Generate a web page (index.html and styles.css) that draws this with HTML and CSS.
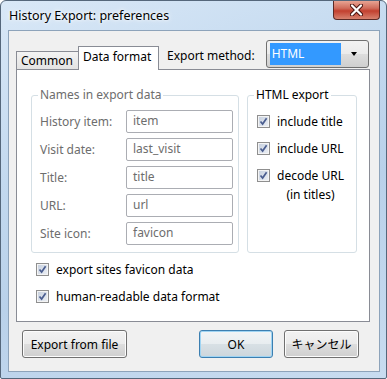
FILE: index.html
```html
<!DOCTYPE html>
<html lang="en">
<head>
  <meta charset="UTF-8" />
  <title>History Export: preferences</title>
  <link rel="stylesheet" href="styles.css">
</head>
<body>

  <div class="window">
    <!-- Title bar -->
    <header class="titlebar">
      <div class="title">History Export: preferences</div>
      <div class="close">
        <svg width="13" height="12" viewBox="0 0 13 12">
          <path d="M2 1.5 L11 10.5 M11 1.5 L2 10.5" stroke="#4a1510" stroke-width="4.2" stroke-linecap="round"/>
          <path d="M2 1.5 L11 10.5 M11 1.5 L2 10.5" stroke="#fff" stroke-width="2.2" stroke-linecap="round"/>
        </svg>
      </div>
    </header>

    <div class="client">
      <div class="tabhead">
        <div class="tabs">
          <div class="tab">Common</div>
          <div class="tab active">Data format</div>
        </div>
        <label class="method-label">Export method:</label>
        <div class="select">
          <span class="select-value">HTML</span>
          <span class="select-arrow"></span>
        </div>
      </div>

      <div class="panel">
        <div class="groups">
          <fieldset class="group names">
            <legend class="muted">Names in export data</legend>
            <div class="name-grid">
              <span class="muted">History item:</span><div class="field">item</div>
              <span class="muted">Visit date:</span><div class="field">last_visit</div>
              <span class="muted">Title:</span><div class="field">title</div>
              <span class="muted">URL:</span><div class="field">url</div>
              <span class="muted">Site icon:</span><div class="field">favicon</div>
            </div>
          </fieldset>

          <fieldset class="group html">
            <legend>HTML export</legend>
            <div class="check-list">
              <div class="check-row"><span class="check"></span><span>include title</span></div>
              <div class="check-row"><span class="check"></span><span>include URL</span></div>
              <div class="check-row"><span class="check"></span><span class="two-line">decode URL<br>(in titles)</span></div>
            </div>
          </fieldset>
        </div>

        <div class="bottom-checks">
          <div class="check-row"><span class="check"></span><span>export sites favicon data</span></div>
          <div class="check-row"><span class="check"></span><span>human-readable data format</span></div>
        </div>
      </div>

      <div class="buttons">
        <button class="btn wide">Export from file</button>
        <button class="btn ok">OK</button>
        <button class="btn cancel">キャンセル</button>
      </div>
    </div>
  </div>

</body>
</html>
```

FILE: styles.css
```css
/* ==== Window frame ==== */
body {
  margin: 0;
  font-family: "Noto Sans", "Noto Sans CJK JP", sans-serif;
  font-size: 12px;
  color: #000;
  background: #fff;
}
.window {
  width: 387px;
  height: 379px;
  box-sizing: border-box;
  border: 1px solid #55677b;
  border-radius: 6px 6px 2px 2px;
  background: linear-gradient(160deg, #d9e8f7 0%, #c3d9ef 35%, #b9d1ea 60%, #c8dcf0 100%);
  display: flex;
  flex-direction: column;
}
.titlebar {
  height: 29px;
  display: flex;
  align-items: flex-start;
  padding-left: 8px;
  padding-right: 6px;
}
.title {
  line-height: 29px;
  font-size: 12.5px;
  text-shadow: 0 0 6px #fff, 0 0 3px #fff;
}
.close {
  margin-left: auto;
  width: 45px;
  height: 18px;
  border: 1px solid #5b2a26;
  border-top: none;
  border-radius: 0 0 4px 4px;
  background: linear-gradient(#e8a493 0%, #d06c5b 40%, #c2402f 55%, #d7826f 100%);
  display: flex;
  align-items: center;
  justify-content: center;
}

/* ==== Client area ==== */
.client {
  margin: 0 6px 6px 7px;
  flex: 1;
  border: 1px solid #8da3ba;
  background: #f0f0f0;
  display: flex;
  flex-direction: column;
}
.tabhead {
  display: flex;
  align-items: center;
  height: 29px;
  margin-top: 9px;
  padding-left: 7px;
}
.tabs {
  display: flex;
  align-items: flex-end;
  align-self: flex-end;
}
.tab {
  height: 17px;
  line-height: 17px;
  padding: 0 4px;
  border: 1px solid #898c95;
  border-bottom: none;
  background: linear-gradient(#f3f3f3, #e3e3e3);
  width: 53px;
}
.tab.active {
  position: relative;
  z-index: 1;
  width: 71px;
  height: 23px;
  line-height: 20px;
  margin-left: -1px;
  margin-bottom: -1px;
  background: #fff;
}
.method-label {
  margin-left: 8px;
  margin-top: 1px;
}
.select {
  margin-left: 11px;
  align-self: flex-start;
  width: 98px;
  height: 26px;
  border: 1px solid #707070;
  border-radius: 3px;
  background: linear-gradient(#f2f2f2 0%, #ebebeb 50%, #dddddd 51%, #cfcfcf 100%);
  display: flex;
  align-items: center;
  padding-left: 3px;
}
.select-value {
  width: 71px;
  height: 22px;
  line-height: 21px;
  padding-left: 2px;
  box-sizing: border-box;
  background: #3399ff;
  color: #fff;
}
.select-arrow {
  margin-left: 10px;
  width: 0;
  height: 0;
  border-left: 3.5px solid transparent;
  border-right: 3.5px solid transparent;
  border-top: 4px solid #000;
}

/* ==== Tab panel ==== */
.panel {
  margin-left: 7px;
  width: 352px;
  height: 251px;
  border: 1px solid #898c95;
  background: #fff;
}
.groups {
  display: flex;
  gap: 8px;
  margin-top: 17px;
  padding-left: 14px;
}
.group {
  margin: 0;
  height: 166px;
  box-sizing: border-box;
  border: 1px solid #d5dfe5;
  border-radius: 3px;
}
.group legend {
  padding: 0 2px;
  line-height: 16px;
}
.muted {
  color: #6d6d6d;
}
.names {
  width: 208px;
  padding: 7px 5px 0 8px;
}
.names legend {
  margin-left: -2px;
}
.name-grid {
  display: grid;
  grid-template-columns: 86px 107px;
  row-gap: 5px;
  align-items: center;
}
.field {
  height: 23px;
  box-sizing: border-box;
  border: 1px solid #abadb3;
  border-radius: 2px;
  padding-left: 6px;
  line-height: 20px;
  color: #6d6d6d;
}
.html {
  width: 110px;
  padding: 9px 4px 0 9px;
}
.html legend {
  margin-left: -3px;
}
.check-list {
  display: flex;
  flex-direction: column;
  gap: 8px;
}
.check-row {
  display: flex;
  align-items: flex-start;
  gap: 7px;
  line-height: 19px;
}
.two-line {
  text-align: center;
}
.check {
  flex: none;
  width: 13px;
  height: 13px;
  margin-top: 3px;
  box-sizing: border-box;
  border: 1px solid #8f8f8f;
  background:
    url("data:image/svg+xml,%3Csvg xmlns='http://www.w3.org/2000/svg' width='11' height='11'%3E%3Cpath d='M2.5 5.5 L4.6 8 L8.6 2.2' fill='none' stroke='%234a5d8f' stroke-width='1.7'/%3E%3C/svg%3E") center no-repeat,
    linear-gradient(135deg, #c4cedd, #eef1f6);
  box-shadow: inset 0 0 0 1px #f4f4f4;
}
.bottom-checks {
  display: flex;
  flex-direction: column;
  gap: 8px;
  margin-top: 7px;
  padding-left: 19px;
}

/* ==== Dialog buttons ==== */
.buttons {
  display: flex;
  margin-top: 8px;
  padding: 0 20px 0 13px;
}
.btn {
  height: 28px;
  font: inherit;
  color: #000;
  border: 1px solid #707070;
  border-radius: 3px;
  background: linear-gradient(#f2f2f2 0%, #ebebeb 50%, #dddddd 51%, #cfcfcf 100%);
  box-shadow: inset 0 0 0 1px #fcfcfc;
  padding: 0;
}
.btn.wide {
  width: 105px;
}
.btn.ok {
  margin-left: auto;
  width: 74px;
  border-color: #3c7fb1;
  background: linear-gradient(#f1f4f6 0%, #e8edf0 50%, #d8e0e5 51%, #cdd6dc 100%);
  box-shadow: inset 0 0 0 1px #9fd4f3;
}
.btn.cancel {
  margin-left: 11px;
  width: 75px;
}
```
